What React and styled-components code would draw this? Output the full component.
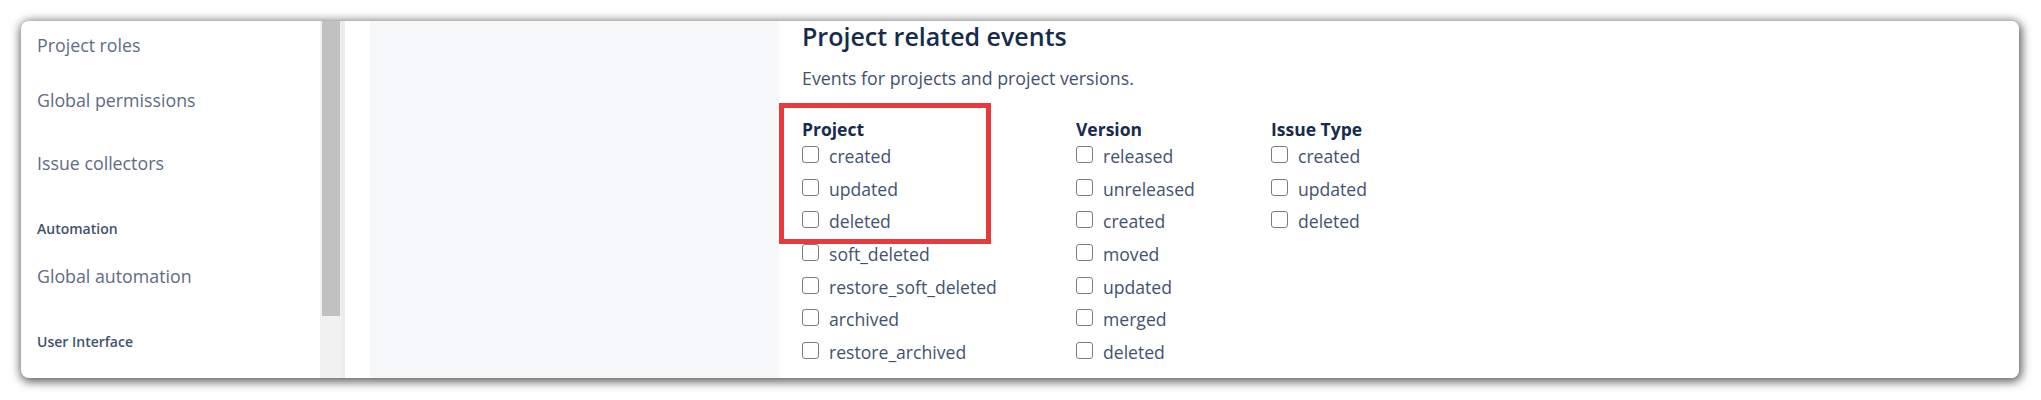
import styled, { createGlobalStyle } from "styled-components";

const GlobalStyle = createGlobalStyle`
  html, body {
    margin: 0;
    padding: 0;
    background: #ffffff;
  }
  body {
    font-family: "Open Sans", "Noto Sans", sans-serif;
  }
`;

const Stage = styled.div`
  width: 2041px;
  height: 400px;
  padding: 21px 22px 0 21px;
  box-sizing: border-box;
  background: #ffffff;
`;

const Window = styled.div`
  display: flex;
  height: 357px;
  border-radius: 8px;
  overflow: hidden;
  background: #ffffff;
  box-shadow: 1px 2px 10px 2px rgba(0, 0, 0, 0.62);
`;

const Sidebar = styled.nav`
  width: 299px;
  flex-shrink: 0;
  padding: 12px 0 0 16px;
  box-sizing: border-box;
  display: flex;
  flex-direction: column;
`;

const NavLink = styled.div`
  height: ${({ h }) => h}px;
  flex-shrink: 0;
  font-size: 17.8px;
  line-height: 24px;
  color: #5e6c84;
  white-space: nowrap;
`;

const NavHeading = styled.div`
  height: ${({ h }) => h}px;
  flex-shrink: 0;
  font-size: 14px;
  font-weight: 600;
  line-height: 20px;
  color: #42526e;
  white-space: nowrap;
`;

const ScrollTrack = styled.div`
  width: 21px;
  flex-shrink: 0;
  background: #f1f1f1;
  padding-left: 2px;
  box-sizing: border-box;
`;

const ScrollThumb = styled.div`
  width: 18px;
  height: 295px;
  background: #c1c1c1;
`;

const Divider = styled.div`
  width: 4px;
  flex-shrink: 0;
  background: #ebecf0;
`;

const Gutter = styled.div`
  width: 25px;
  flex-shrink: 0;
  background: #ffffff;
`;

const GrayPane = styled.div`
  width: 409px;
  flex-shrink: 0;
  background: #f7f8f9;
`;

const Main = styled.main`
  position: relative;
  flex: 1;
  padding: 2px 0 0 23px;
  background: #ffffff;
`;

const Title = styled.h3`
  margin: 0;
  font-size: 25px;
  line-height: 26px;
  font-weight: 600;
  color: #172b4d;
`;

const Description = styled.p`
  margin: 17px 0 0;
  font-size: 17.8px;
  line-height: 24px;
  color: #42526e;
`;

const Columns = styled.div`
  display: flex;
  margin-top: 27.5px;
`;

const Column = styled.div`
  width: ${({ w }) => (w ? `${w}px` : "auto")};
  flex-shrink: 0;
  display: flex;
  flex-direction: column;
`;

const ColumnTitle = styled.div`
  font-size: 17.5px;
  line-height: 22px;
  font-weight: 700;
  color: #172b4d;
`;

const Row = styled.label`
  display: flex;
  align-items: center;
  gap: 10px;
  height: 32.7px;
  font-size: 17.6px;
  color: #42526e;
  white-space: nowrap;
`;

const Box = styled.input.attrs({ type: "checkbox" })`
  appearance: none;
  margin: 0 0 3px;
  width: 17px;
  height: 17px;
  border: 1.5px solid #7d7d7d;
  border-radius: 3px;
  background: #ffffff;
  box-sizing: border-box;
  flex-shrink: 0;
`;

const Highlight = styled.div`
  position: absolute;
  left: 0;
  top: 82px;
  width: 212px;
  height: 141px;
  border: 5px solid #e83a3a;
  box-sizing: border-box;
  pointer-events: none;
`;

const groups = [
  {
    title: "Project",
    width: 274,
    items: [
      "created",
      "updated",
      "deleted",
      "soft_deleted",
      "restore_soft_deleted",
      "archived",
      "restore_archived"
    ]
  },
  {
    title: "Version",
    width: 195,
    items: [
      "released",
      "unreleased",
      "created",
      "moved",
      "updated",
      "merged",
      "deleted"
    ]
  },
  {
    title: "Issue Type",
    items: ["created", "updated", "deleted"]
  }
];

const App = () => (
  <>
    <GlobalStyle />
    <Stage>
      <Window>
        <Sidebar>
          <NavLink h={55}>Project roles</NavLink>
          <NavLink h={63.4}>Global permissions</NavLink>
          <NavLink h={67.6}>Issue collectors</NavLink>
          <NavHeading h={44.7}>Automation</NavHeading>
          <NavLink h={67.9}>Global automation</NavLink>
          <NavHeading h={20}>User Interface</NavHeading>
        </Sidebar>
        <ScrollTrack>
          <ScrollThumb />
        </ScrollTrack>
        <Divider />
        <Gutter />
        <GrayPane />
        <Main>
          <Title>Project related events</Title>
          <Description>Events for projects and project versions.</Description>
          <Columns>
            {groups.map((group) => (
              <Column key={group.title} w={group.width}>
                <ColumnTitle>{group.title}</ColumnTitle>
                {group.items.map((item, i) => (
                  <Row key={`${group.title}-${i}`}>
                    <Box />
                    {item}
                  </Row>
                ))}
              </Column>
            ))}
          </Columns>
          <Highlight />
        </Main>
      </Window>
    </Stage>
  </>
);

export default App;
